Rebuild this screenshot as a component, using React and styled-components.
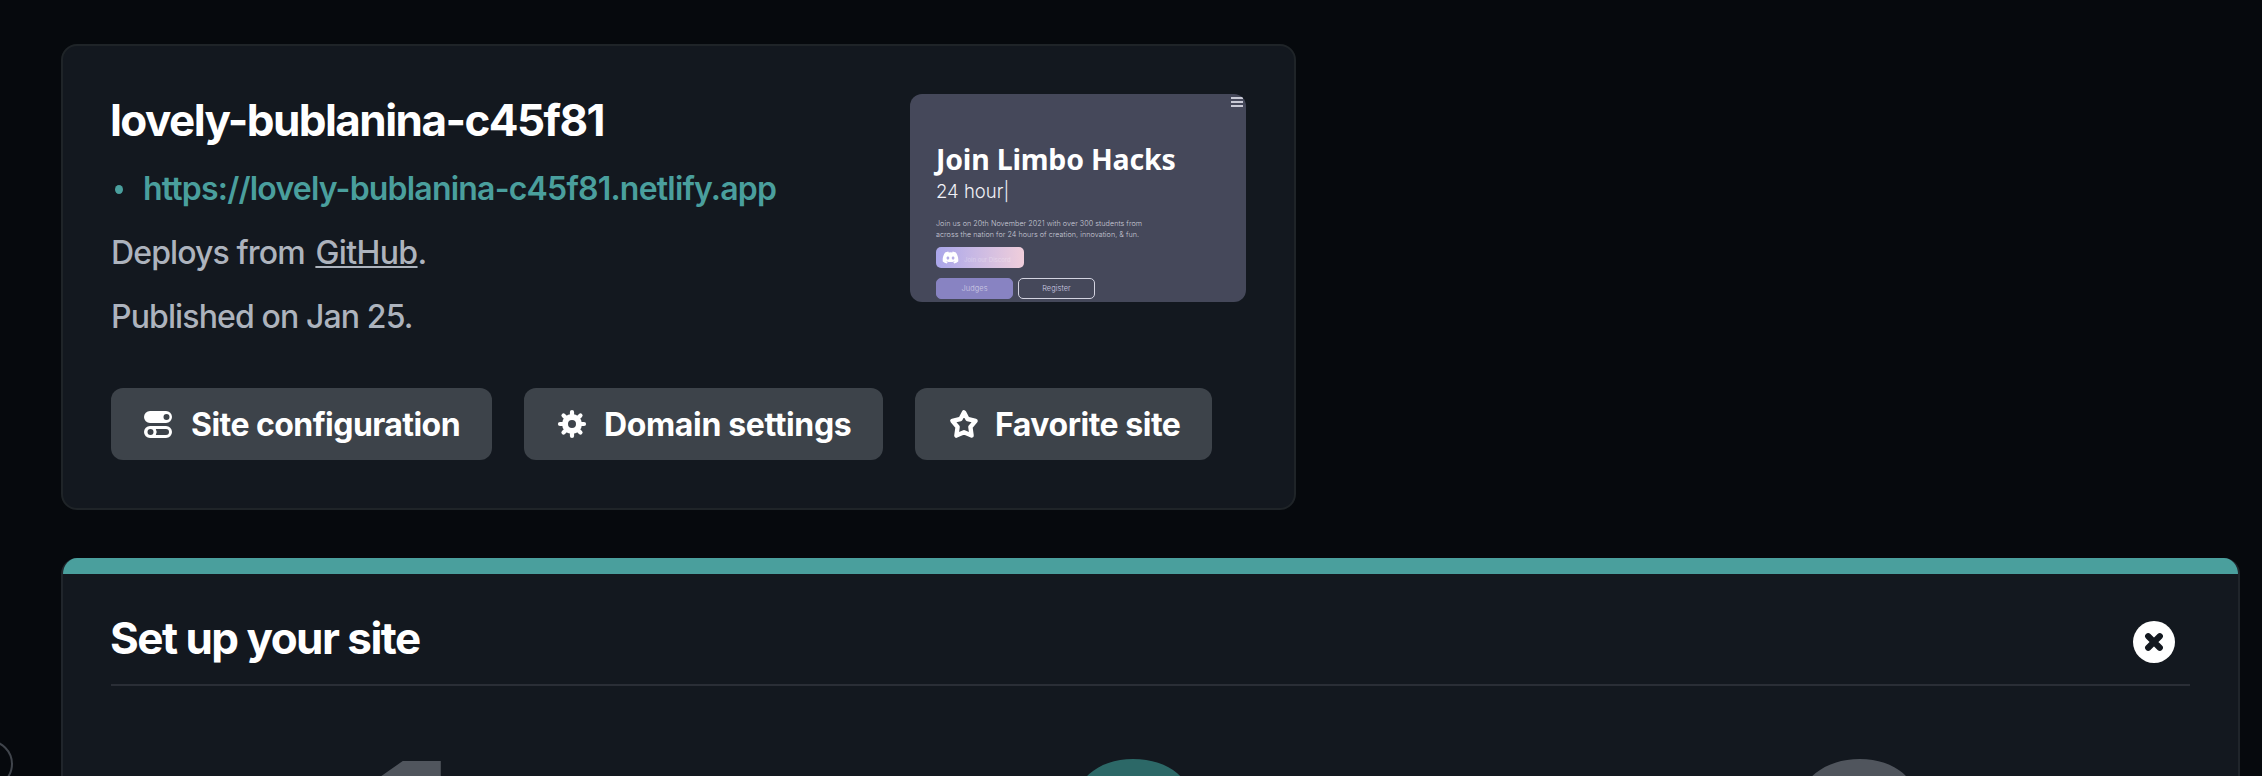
import React from "react";
import styled, { createGlobalStyle } from "styled-components";
import { FaDiscord } from "react-icons/fa";

const GlobalStyle = createGlobalStyle`
  * { box-sizing: border-box; }
  html, body { margin: 0; height: 100%; overflow: hidden; background: #06090d; }
  body { font-family: Inter, "Liberation Sans", sans-serif; color: #fff; }
`;

const Page = styled.main`
  position: relative;
  height: 776px;
  overflow: hidden;
  padding: 44px 22px 0 61px;
  display: flex;
  flex-direction: column;
  gap: 48px;
`;

const SiteCard = styled.section`
  width: 1235px;
  flex: none;
  padding: 48px;
  border: 2px solid #1f2428;
  border-radius: 16px;
  background: #13181f;
`;

const CardTop = styled.div`
  display: flex;
  justify-content: space-between;
  align-items: flex-start;
  height: 254px;
`;

const Title = styled.h2`
  margin: 0 0 0 -1px;
  font-size: 44px;
  line-height: 52px;
  font-weight: 700;
  letter-spacing: ${(p) => p.$spacing};
  white-space: nowrap;
`;

const Details = styled.div`
  display: flex;
  flex-direction: column;
`;

const UrlRow = styled.a`
  display: flex;
  align-items: center;
  margin-top: 11px;
  gap: 20px;
  padding-left: 4px;
  color: #4a9f9d;
  font-size: 32px;
  line-height: 64px;
  font-weight: 600;
  letter-spacing: -0.8px;
`;

const Dot = styled.span`
  width: 8px;
  height: 9px;
  border-radius: 50%;
  background: currentColor;
`;

const Line = styled.p`
  margin: 0;
  font-size: 32px;
  line-height: 64px;
  font-weight: 450;
  letter-spacing: -0.88px;
  color: #adb3bd;
`;

const RepoLink = styled.a`
  margin-left: 3px;
  letter-spacing: -0.6px;
  text-decoration: underline;
  text-decoration-thickness: 2px;
  text-underline-offset: 2px;
  text-decoration-skip-ink: none;
`;

const Preview = styled.div`
  width: 336px;
  height: 208px;
  border-radius: 12px;
  background: #45485a;
  overflow: hidden;
  padding-left: 26px;
`;

const PreviewBar = styled.div`
  height: 45px;
  padding: 3px 3px 0 0;
  display: flex;
  justify-content: flex-end;
`;

const Burger = styled.div`
  width: 12px;
  height: 10px;
  display: flex;
  flex-direction: column;
  justify-content: space-between;
  &::before, &::after, i { content: ""; height: 2px; background: #c9cad6; }
`;

const PreviewTitle = styled.div`
  font: 700 28.5px/40px "Noto Sans", sans-serif;
  letter-spacing: -0.2px;
  white-space: nowrap;
`;

const PreviewTyped = styled.div`
  font-size: 18.5px;
  line-height: 24px;
  font-weight: 300;
  letter-spacing: 0;
  color: #f0f0f6;
`;

const PreviewCopy = styled.p`
  margin: 15px 0 0;
  font-size: 7.2px;
  line-height: 11.3px;
  font-weight: 300;
  letter-spacing: 0.05px;
  color: #c9cad8;
  white-space: nowrap;
`;

const DiscordButton = styled.div`
  display: flex;
  align-items: center;
  gap: 5px;
  width: 88px;
  height: 21px;
  margin-top: 6px;
  padding-left: 6px;
  border-radius: 5px;
  background: linear-gradient(90deg, #aaa6ea 0%, #c9b9e4 45%, #f0cedb 100%);
  font-size: 6px;
  color: #fff;
  span { opacity: 0.3; padding-top: 5px; }
`;

const PreviewActions = styled.div`
  display: flex;
  gap: 5px;
  margin-top: 10px;
`;

const PreviewButton = styled.div`
  width: 77px;
  height: 21px;
  display: flex;
  align-items: center;
  justify-content: center;
  border-radius: 5px;
  border: 1px solid ${(p) => (p.$outline ? "#d3d3e0" : "#8883c2")};
  background: ${(p) => (p.$outline ? "transparent" : "#8883c2")};
  color: #cfcde4;
  font-size: 7.4px;
  font-weight: 300;
  letter-spacing: 0.1px;
`;

const Actions = styled.div`
  display: flex;
  gap: 32px;
  margin-top: 40px;
`;

const Button = styled.button`
  width: ${(p) => p.$width}px;
  height: 72px;
  border: 0;
  border-radius: 12px;
  padding: 2px 0 0 32px;
  display: flex;
  align-items: center;
  gap: 16px;
  background: #3d434a;
  color: #fff;
  font: 700 32px/40px Inter, sans-serif;
  letter-spacing: ${(p) => p.$spacing}px;
  white-space: nowrap;
  svg { flex: none; margin-top: -2px; }
`;

const SetupCard = styled.section`
  flex: none;
  height: 420px;
  border: 2px solid #20252b;
  border-top: 0;
  border-radius: 16px;
  background: #13181f;
  overflow: hidden;
`;

const Accent = styled.div`
  height: 16px;
  background: #4a9f9d;
`;

const SetupHeader = styled.header`
  display: flex;
  justify-content: space-between;
  align-items: flex-start;
  height: 112px;
  margin: 0 48px;
  padding: 38px 15px 0 0;
  border-bottom: 2px solid #2a2e36;
`;

const CloseButton = styled.button`
  width: 42px;
  height: 42px;
  margin-top: 9px;
  padding: 0;
  border: 0;
  background: none;
  svg { display: block; }
`;

const Steps = styled.div`
  display: grid;
  grid-template-columns: repeat(3, 1fr);
  gap: 96px;
  margin: 42px 48px 0;
`;

const StepNumber = styled.div`
  padding-right: ${(p) => p.$shift}px;
  text-align: center;
  font-size: 238px;
  line-height: 1;
  font-weight: 700;
  color: ${(p) => (p.$active ? "#2c6867" : "#50555d")};
`;

const FloatingToggle = styled.div`
  position: absolute;
  left: -35px;
  top: 740px;
  width: 48px;
  height: 48px;
  border-radius: 50%;
  border: 2px solid #40454c;
`;

const TogglesIcon = () => (
  <svg width="32" height="32" viewBox="0 0 32 32" fill="currentColor" fillRule="evenodd">
    <path d="M7 3H23A6 6 0 0 1 23 15H7A6 6 0 0 1 7 3ZM23.5 6A3 3 0 1 0 23.5 12A3 3 0 1 0 23.5 6Z" />
    <path d="M7 18H23A6 6 0 0 1 23 30H7A6 6 0 0 1 7 18ZM7.5 21A3 3 0 1 0 7.5 27A3 3 0 1 0 7.5 21ZM12.8 21Q14.6 24 12.8 27H23A3 3 0 0 0 23 21Z" />
  </svg>
);

const GearIcon = () => (
  <svg width="32" height="32" viewBox="0 0 32 32" fill="none" stroke="currentColor">
    <circle cx="16" cy="16" r="7" strokeWidth="6" />
    {[0, 45, 90, 135, 180, 225, 270, 315].map((a) => (
      <path key={a} d="M16 8V4" strokeWidth="4.2" strokeLinecap="round" transform={`rotate(${a} 16 16)`} />
    ))}
  </svg>
);

const StarIcon = () => (
  <svg width="32" height="32" viewBox="-1 0 32 32" fill="none" stroke="currentColor" strokeWidth="4.4" strokeLinejoin="round">
    <path d="M16 4.4L19.5 11L27.6 12.8L22.4 19L23.6 27.6L16 24.3L8.4 27.6L9.6 19L4.4 12.8L12.5 11Z" />
  </svg>
);

const CloseIcon = () => (
  <svg width="42" height="42" viewBox="0 0 42 42">
    <circle cx="21" cy="21" r="21" fill="#fff" />
    <path d="M15.2 15.2L26.8 26.8M26.8 15.2L15.2 26.8" stroke="#13181f" strokeWidth="6.2" strokeLinecap="round" />
  </svg>
);

const ACTIONS = [
  { label: "Site configuration", icon: TogglesIcon, width: 381, spacing: -0.55 },
  { label: "Domain settings", icon: GearIcon, width: 359, spacing: -0.36 },
  { label: "Favorite site", icon: StarIcon, width: 297, spacing: -0.47 },
];

export default function App() {
  return (
    <Page>
      <GlobalStyle />
      <SiteCard>
        <CardTop>
          <Details>
            <Title $spacing="-1.55px">lovely-bublanina-c45f81</Title>
            <UrlRow>
              <Dot />
              https://lovely-bublanina-c45f81.netlify.app
            </UrlRow>
            <Line>
              Deploys from <RepoLink>GitHub</RepoLink>.
            </Line>
            <Line>Published on Jan 25.</Line>
          </Details>
          <Preview>
            <PreviewBar>
              <Burger><i /></Burger>
            </PreviewBar>
            <PreviewTitle>Join Limbo Hacks</PreviewTitle>
            <PreviewTyped>24 hour|</PreviewTyped>
            <PreviewCopy>
              Join us on 20th November 2021 with over 300 students from
              <br />
              across the nation for 24 hours of creation, innovation, &amp; fun.
            </PreviewCopy>
            <DiscordButton>
              <FaDiscord size={17} />
              <span>Join our Discord</span>
            </DiscordButton>
            <PreviewActions>
              <PreviewButton>Judges</PreviewButton>
              <PreviewButton $outline>Register</PreviewButton>
            </PreviewActions>
          </Preview>
        </CardTop>
        <Actions>
          {ACTIONS.map(({ label, icon: Icon, width, spacing }) => (
            <Button key={label} $width={width} $spacing={spacing}>
              <Icon />
              {label}
            </Button>
          ))}
        </Actions>
      </SiteCard>
      <SetupCard>
        <Accent />
        <SetupHeader>
          <Title $spacing="-1.52px">Set up your site</Title>
          <CloseButton aria-label="Close"><CloseIcon /></CloseButton>
        </SetupHeader>
        <Steps>
          <StepNumber $shift={41}>1</StepNumber>
          <StepNumber $shift={32} $active>2</StepNumber>
          <StepNumber $shift={32}>3</StepNumber>
        </Steps>
      </SetupCard>
      <FloatingToggle />
    </Page>
  );
}
